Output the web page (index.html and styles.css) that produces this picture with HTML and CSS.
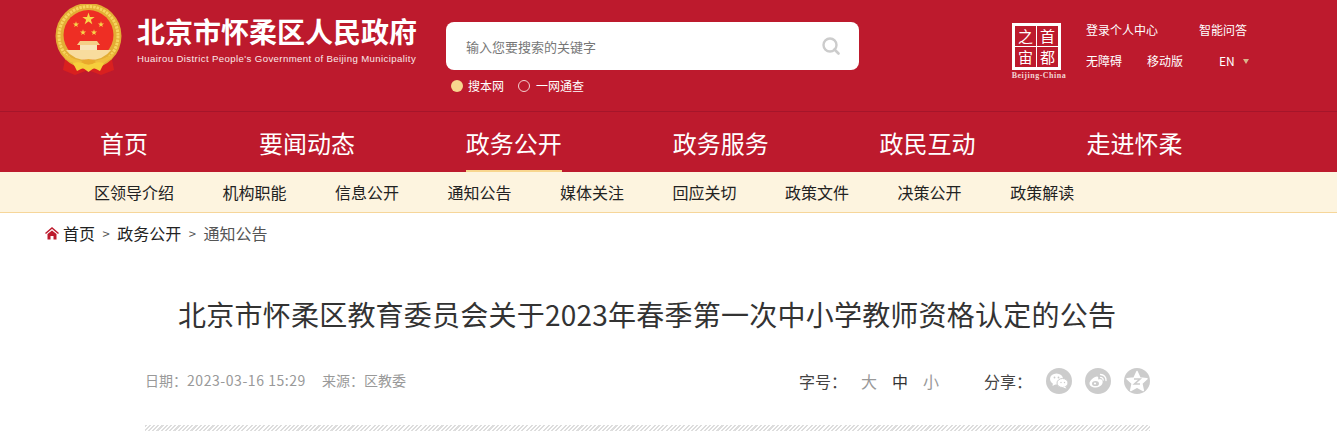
FILE: index.html
```html
<!DOCTYPE html>
<html lang="zh-CN">
<head>
<meta charset="utf-8">
<title>北京市怀柔区教育委员会关于2023年春季第一次中小学教师资格认定的公告</title>
<link rel="stylesheet" href="styles.css">
</head>
<body>
<header class="top">
  <div class="brand">
    <svg class="emblem" viewBox="0 0 68 72" width="68" height="72" aria-hidden="true">
      <defs>
        <polygon id="star" points="0,-1 .225,-.309 .951,-.309 .363,.118 .588,.809 0,.382 -.588,.809 -.363,.118 -.951,-.309 -.225,-.309"/>
      </defs>
      <path d="M11 50 L8 66 L20 71 L33 66 L46 71 L59 66 L56 50 Z" fill="#d9201f"/>
      <circle cx="33.500" cy="32" r="33" fill="#e3ae35"/>
      <circle cx="33.500" cy="32" r="29.500" fill="none" stroke="#f7d55e" stroke-width="3" stroke-dasharray="2.500 1"/>
      <circle cx="33.500" cy="31" r="25" fill="#ee2e24"/>
      <g fill="#f8d64a">
        <use href="#star" transform="translate(33.500 15) scale(6.500)"/>
        <use href="#star" transform="translate(21 20.500) scale(3.200)"/>
        <use href="#star" transform="translate(46 20.500) scale(3.200)"/>
        <use href="#star" transform="translate(28 28.500) scale(3.200)"/>
        <use href="#star" transform="translate(39 28.500) scale(3.200)"/>
      </g>
      <path d="M25 37 L42 37 L45 41 L22 41 Z" fill="#f4cf88"/>
      <path d="M25 41 H42 V46 H25 Z" fill="#f8e4b8"/>
      <path d="M11 46 H56 Q49 56 33.500 56 Q18 56 11 46 Z" fill="#f8dc9e"/>
      <path d="M8 49 Q33 66 59 49 L57 54 Q33 71 10 54 Z" fill="#f0bd3c"/>
      <path d="M18 59 Q26 57 33.500 61 Q41 57 49 59 L45 67 L39 64 L33.500 68 L28 64 L22 67 Z" fill="#f6cf3c"/>
      <path d="M26 58 Q33.500 52 41 58 Q33.500 63 26 58 Z" fill="#e9a92c"/>
    </svg>
    <div class="brand-text">
      <div class="brand-cn">北京市怀柔区人民政府</div>
      <div class="brand-en">Huairou District People's Government of Beijing Municipality</div>
    </div>
  </div>
  <div class="search">
    <div class="search-box">
      <span class="placeholder">输入您要搜索的关键字</span>
      <svg class="search-icon" viewBox="0 0 18 18" width="18" height="18" aria-hidden="true">
        <circle cx="8" cy="8" r="6.500" fill="none" stroke="#ccc" stroke-width="2.400"/>
        <path d="M12.500 12.500 L16.500 16.500" stroke="#ccc" stroke-width="2.600" stroke-linecap="round"/>
      </svg>
    </div>
    <div class="scope">
      <span class="radio radio-on"></span><span class="scope-label">搜本网</span>
      <span class="radio radio-off"></span><span class="scope-label">一网通查</span>
    </div>
  </div>
  <div class="seal">
    <div class="seal-box">
      <span>之</span><span>首</span><span>宙</span><span>都</span>
    </div>
    <div class="seal-en">Beijing-China</div>
  </div>
  <div class="links">
    <div class="link-row">
      <a class="link link-login">登录个人中心</a>
      <a class="link">智能问答</a>
    </div>
    <div class="link-row">
      <a class="link link-a">无障碍</a>
      <a class="link link-b">移动版</a>
      <a class="link link-en">EN<i class="caret"></i></a>
    </div>
  </div>
</header>
<nav class="nav">
  <a class="nav-item">首页</a>
  <a class="nav-item">要闻动态</a>
  <a class="nav-item nav-active">政务公开</a>
  <a class="nav-item">政务服务</a>
  <a class="nav-item">政民互动</a>
  <a class="nav-item">走进怀柔</a>
</nav>
<div class="subnav">
  <a>区领导介绍</a><a>机构职能</a><a>信息公开</a><a>通知公告</a><a>媒体关注</a><a>回应关切</a><a>政策文件</a><a>决策公开</a><a>政策解读</a>
</div>
<div class="crumbs">
  <svg class="home" viewBox="0 0 14 13" width="14" height="13" aria-hidden="true">
    <path d="M0.500 6.500 L7 1 L13.500 6.500" fill="none" stroke="#bd1a2d" stroke-width="1.500"/>
    <path d="M2.500 7 L7 3.500 L11.500 7 L11.500 12.500 L8.500 12.500 L8.500 9 L5.500 9 L5.500 12.500 L2.500 12.500 Z" fill="#bd1a2d"/>
  </svg>
  <a>首页</a><span class="sep">&gt;</span><a>政务公开</a><span class="sep">&gt;</span><a class="current">通知公告</a>
</div>
<main class="article">
  <h1 class="title">北京市怀柔区教育委员会关于2023年春季第一次中小学教师资格认定的公告</h1>
  <div class="meta">
    <div class="meta-left">
      <span>日期：<span class="digits">2023-03-16 15:29</span></span>
      <span>来源：区教委</span>
    </div>
    <div class="meta-right">
      <span class="meta-label">字号：</span>
      <span class="size size-l">大</span>
      <span class="size size-m">中</span>
      <span class="size size-s">小</span>
      <span class="meta-label share-label">分享：</span>
      <span class="share">
        <svg viewBox="0 0 26 26" width="26" height="26" aria-hidden="true">
          <ellipse cx="10.500" cy="11" rx="6.500" ry="5.500" fill="#fff"/>
          <path d="M7 15 L6.500 18 L10 16 Z" fill="#fff"/>
          <ellipse cx="16.500" cy="15" rx="5.500" ry="4.500" fill="#fff" stroke="#ccc"/>
          <path d="M19 18.500 L20.500 20.500 L17 19.500 Z" fill="#fff"/>
          <circle cx="8.500" cy="9.500" r="0.900" fill="#ccc"/><circle cx="12.500" cy="9.500" r="0.900" fill="#ccc"/>
          <circle cx="15" cy="14.500" r="0.700" fill="#ccc"/><circle cx="18.500" cy="14.500" r="0.700" fill="#ccc"/>
        </svg>
      </span>
      <span class="share">
        <svg viewBox="0 0 26 26" width="26" height="26" aria-hidden="true">
          <path d="M11 19.500 C6.500 19.500 4.500 17.500 4.500 15.500 C4.500 12.500 9 8.500 12 8.500 C13.500 8.500 13.500 10 13 11.500 C15 10.800 17.500 11 17.500 13 C18.500 15.500 15.500 19.500 11 19.500 Z" fill="#fff"/>
          <ellipse cx="10.500" cy="15.500" rx="3.500" ry="2.600" fill="#ccc"/>
          <circle cx="10" cy="15.500" r="1.100" fill="#fff"/>
          <path d="M15.500 6.500 A5.500 5.500 0 0 1 21 12.500 M15.500 9.300 A2.700 2.700 0 0 1 18.200 12" fill="none" stroke="#fff" stroke-width="1.300" stroke-linecap="round"/>
        </svg>
      </span>
      <span class="share">
        <svg viewBox="0 0 26 26" width="26" height="26" aria-hidden="true">
          <polygon points="13,3.500 16,10 23,10.800 17.800,15.500 19.300,22.500 13,19 6.700,22.500 8.200,15.500 3,10.800 10,10" fill="#fff" stroke="#fff" stroke-linejoin="round" stroke-width="1.500"/>
          <path d="M10 11 L16 11 L10.500 16 L16 16" fill="none" stroke="#ccc" stroke-width="1.600"/>
        </svg>
      </span>
    </div>
  </div>
  <div class="hatch"></div>
</main>
</body>
</html>
```

FILE: styles.css
```css
* { box-sizing: border-box; }
html, body { margin: 0; padding: 0; }
body {
  height: 432px;
  overflow: hidden;
  background: #fff;
  color: #333;
  font-family: "Noto Sans CJK SC", "Liberation Sans", sans-serif;
}
a { color: inherit; text-decoration: none; }

.top {
  height: 112px;
  background: #bd1a2d;
  border-bottom: 1px solid #a5152a;
  display: flex;
  align-items: flex-start;
  color: #fff;
}
.brand { display: flex; margin: 4px 0 0 55px; width: 391px; }
.emblem { flex: none; }
.brand-text { margin: 8px 0 0 14px; }
.brand-cn {
  font-size: 28px;
  line-height: 38px;
  font-weight: 700;
  white-space: nowrap;
}
.brand-en {
  font-family: "Liberation Sans", sans-serif;
  font-size: 9.600px;
  line-height: 12px;
  margin-top: 3px;
  letter-spacing: 0.400px;
  white-space: nowrap;
  font-weight: 400;
  color: #fbe9e9;
}

.search { width: 413px; margin-top: 22px; }
.search-box {
  height: 48px;
  background: #fff;
  border-radius: 8px;
  display: flex;
  align-items: center;
  justify-content: space-between;
  padding: 0 19px 0 20px;
}
.placeholder { font-size: 13px; color: #777; }
.scope {
  display: flex;
  align-items: center;
  margin: 8px 0 0 5px;
  font-size: 12px;
  line-height: 16px;
  color: #fff;
}
.scope-label { margin-right: 14px; }
.radio {
  width: 12px;
  height: 12px;
  border-radius: 50%;
  margin-right: 5px;
}
.radio-on { background: #f8d68e; }
.radio-off { margin-right: 6px; border: 1px solid #f3d0d0; }

.seal { width: 54px; margin: 23px 0 0 153px; flex: none; }
.seal-box {
  width: 49px;
  height: 47px;
  margin-left: 0;
  background: #fff;
  padding: 3px;
  display: grid;
  grid-template-columns: 1fr 1fr;
  gap: 1px;
}
.seal-box span {
  background: #bd1a2d;
  color: #fff;
  font-size: 15px;
  line-height: 20px;
  text-align: center;
}
.seal-en {
  font-family: "Liberation Serif", serif;
  font-size: 8px;
  font-weight: 700;
  line-height: 10px;
  letter-spacing: 0.500px;
  white-space: nowrap;
  color: #f3d5d5;
  margin: 1px -3px 0;
  text-align: center;
}
.links { margin: 22px 0 0 20px; font-size: 12px; line-height: 16px; }
.link-row { display: flex; height: 31px; }
.link { white-space: nowrap; }
.link-login { width: 113px; }
.link-a { width: 61px; }
.link-b { width: 72px; }
.link-en { display: flex; align-items: flex-start; }
.caret {
  width: 0;
  height: 0;
  margin: 6px 0 0 8px;
  border: 3px solid transparent;
  border-top: 5px solid #d9b48a;
  border-bottom: 0;
}

.nav {
  height: 60px;
  background: #bd1a2d;
  display: flex;
  padding-left: 100px;
  gap: 110.900px;
  color: #fff;
}
.nav-item {
  font-size: 24px;
  line-height: 61px;
  height: 60px;
  white-space: nowrap;
}
.nav-active { border-bottom: 2px solid #f8d68e; }

.subnav {
  height: 41px;
  background: #fdf4df;
  border-bottom: 1px solid #f6d69a;
  display: flex;
  gap: 48.500px;
  padding-left: 94px;
  color: #222;
  font-size: 16px;
  line-height: 40px;
}

.crumbs {
  display: flex;
  align-items: center;
  height: 40px;
  padding-left: 45px;
  font-size: 16px;
  color: #222;
}
.home { margin-right: 4px; }
.sep { margin: 0 7.500px; font-size: 13px; color: #555; }
.current { color: #555; }

.article { margin: 0 187px 0 145px; }
.title {
  margin: 39px 0 0 -145px;
  width: 1337px;
  height: 44px;
  padding-left: 178px;
  font-size: 28px;
  line-height: 44px;
  font-weight: 400;
  letter-spacing: 0.230px;
  color: #333;
  white-space: nowrap;
}
.meta {
  display: flex;
  justify-content: space-between;
  margin-top: 32px;
  height: 26px;
  align-items: center;
}
.meta-left { display: flex; gap: 16px; margin-top: -2px; font-size: 14px; color: #999; }
.digits { letter-spacing: 0.560px; }
.meta-right { display: flex; align-items: center; font-size: 16px; }
.meta-label { color: #444; width: 62px; white-space: nowrap; }
.size { width: 31px; }
.size-l, .size-s { color: #999; }
.size-m { color: #333; }
.share-label { margin-left: 30px; }
.share {
  width: 26px;
  height: 26px;
  border-radius: 50%;
  background: #ccc;
  margin-right: 13px;
  display: block;
}
.share svg { display: block; }
.share:last-child { margin-right: 0; }
.hatch {
  margin-top: 31px;
  height: 6px;
  background: repeating-linear-gradient(135deg, #ddd 0, #ddd 1.500px, #fff 1.500px, #fff 3px);
}
```
